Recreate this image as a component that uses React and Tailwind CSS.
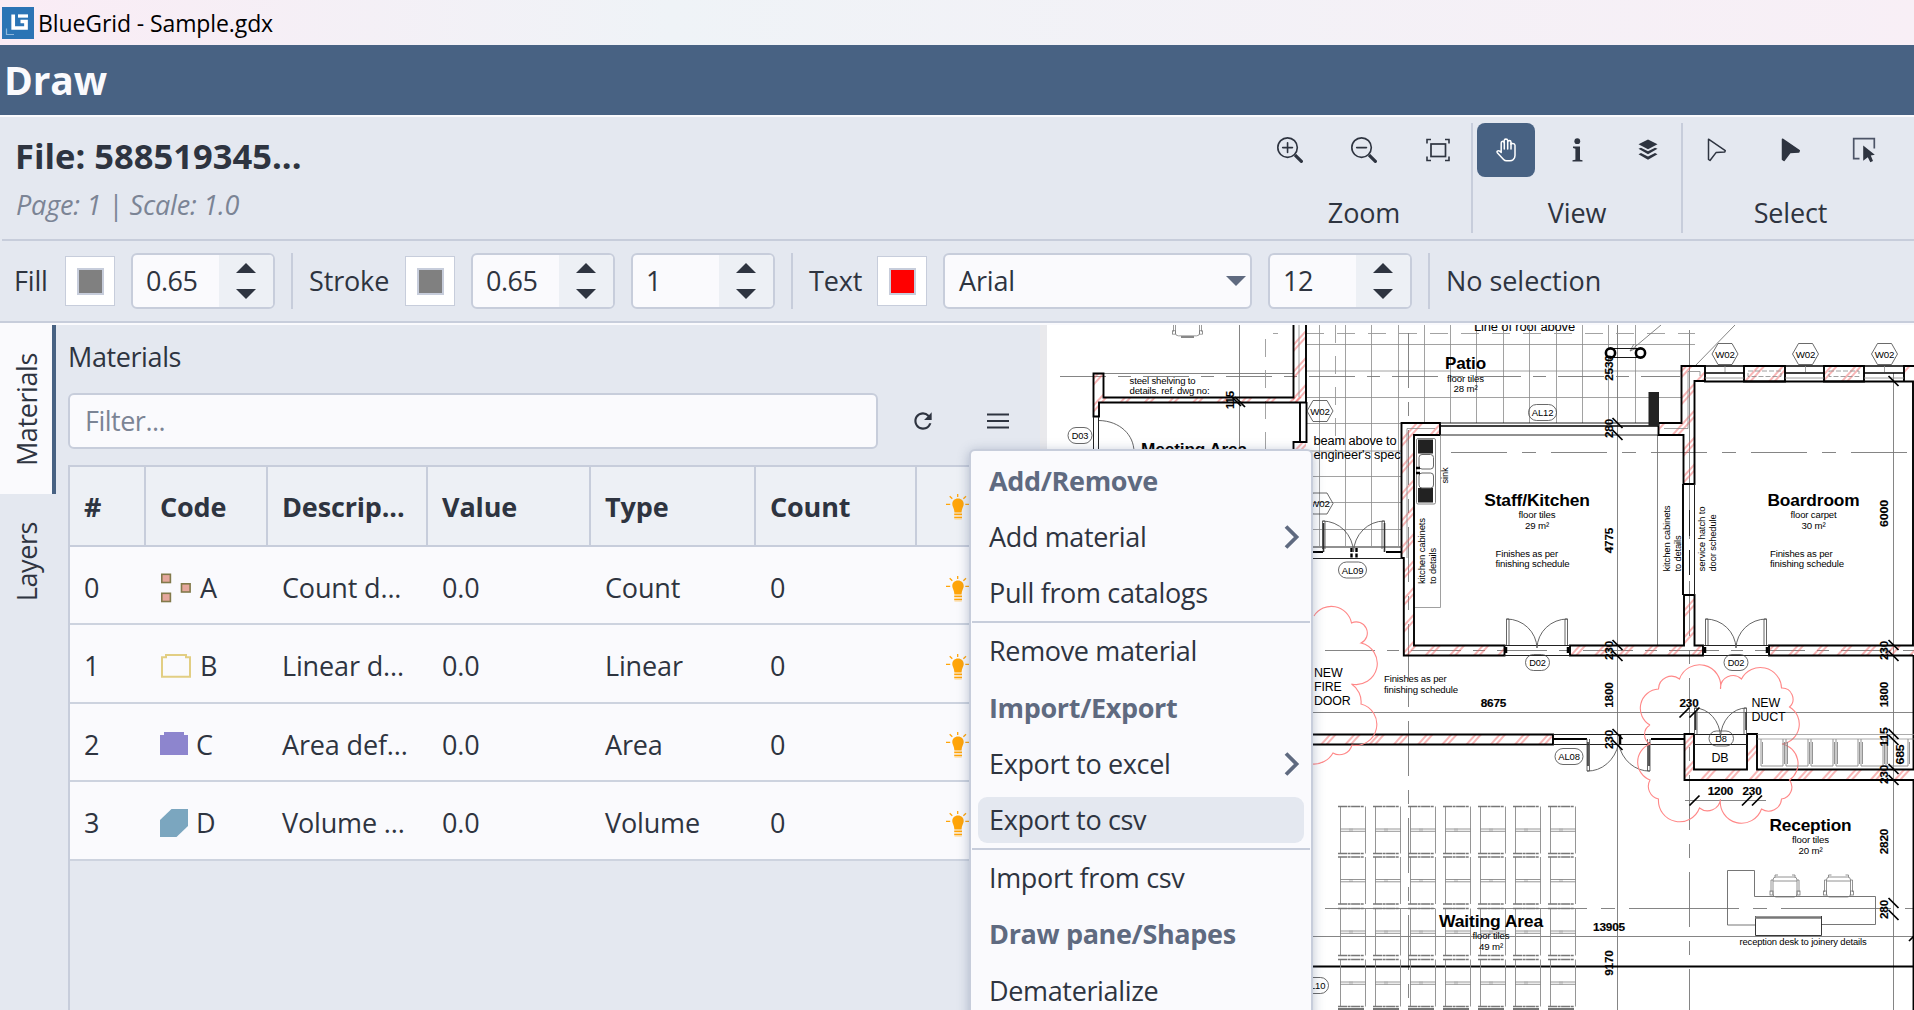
import React from 'react';
import { BsZoomIn, BsZoomOut } from 'react-icons/bs';
import { MdRefresh } from 'react-icons/md';

const FONT = "font-['Open_Sans','Noto_Sans',sans-serif]";

/* ---------- Icons ---------- */

function Logo() {
  return (
    <svg width="32" height="32" viewBox="0 0 32 32" className="shrink-0">
      <rect width="32" height="32" fill="#2b74b5" />
      <path d="M11.200 7.500V21H24V14.500H18.500" fill="none" stroke="#fff" strokeWidth="3.700" />
      <path d="M16 9H26" stroke="#fff" strokeWidth="3.300" />
      <path d="M4.500 21.500V27.500H12" fill="none" stroke="#8db6dc" strokeWidth="1.200" />
    </svg>
  );
}

function FitIcon() {
  return (
    <svg width="24" height="24" viewBox="0 0 24 24" fill="none" stroke="#2e3440">
      <path d="M1 5.500V1.500H5M19 1.500H23V5.500M23 18.500V22.500H19M5 22.500H1V18.500" strokeWidth="1.600" />
      <rect x="5" y="6" width="14.500" height="12.500" strokeWidth="1.700" />
    </svg>
  );
}

function HandIcon() {
  return (
    <svg width="20" height="24" viewBox="0 0 20 24" fill="none" stroke="#fff" strokeWidth="1.500" strokeLinejoin="round" strokeLinecap="round">
      <path d="M5.200 14.500V4.700Q5.200 3.300 6.700 3.200Q8.200 3.300 8.200 4.700V2.600Q8.300 1.200 9.900 1.100Q11.600 1.200 11.700 2.600V3.600Q11.900 2.500 13.300 2.500Q14.900 2.600 15 4V6.300Q15.400 5.300 16.800 5.400Q18.900 5.600 19 7.300V17.500Q19 20 17.200 21.600Q15.900 22.700 14 22.800H10.500Q8.800 22.700 7.600 21.400L1.300 14.700Q.700 13.800 1.300 13.200Q2.500 12.200 3.700 13.200Z" />
      <path d="M8.300 4.500V11M11.700 3.500V11M15 5V11" />
    </svg>
  );
}

function InfoIcon() {
  return (
    <svg width="11" height="24" viewBox="0 0 11 24" fill="#2e3440">
      <circle cx="5.300" cy="3.200" r="2.900" />
      <path d="M1 8.600H8V21.700L10.500 22.300V23.600H.500V22.300L3.400 21.700V10.700L1 10Z" />
    </svg>
  );
}

function LayersIcon() {
  return (
    <svg width="20" height="22" viewBox="0 0 20 22" fill="#2e3440">
      <path d="M10 .500L19.500 5.300L10 10.200L.500 5.300Z" />
      <path d="M.500 9.800L3 8.700L10 12.200L17 8.700L19.500 9.800L10 15.200Z" />
      <path d="M.500 15.200L3 14.100L10 17.600L17 14.100L19.500 15.200L10 20.700Z" />
    </svg>
  );
}

function ArrowIcon({ filled }) {
  return (
    <svg width="20" height="24" viewBox="0 0 20 24" fill={filled ? '#2e3440' : 'none'} stroke="#2e3440" strokeWidth="1.500" strokeLinejoin="round">
      <path d="M1.500 1.200L18.300 12.600L17.800 13.900L9 14.600L3 22.500L1.500 21.500Z" />
    </svg>
  );
}

function BoxSelectIcon() {
  return (
    <svg width="24" height="26" viewBox="0 0 24 26">
      <path d="M7.500 21.600H1.700V1.600H22.300V11.500" fill="none" stroke="#4c5467" strokeWidth="1.700" />
      <path d="M11.200 8.500L22.800 17.700L18.800 18.600L21 24L18.300 25.300L15.800 20.200L11.200 23.700Z" fill="#2e3440" />
    </svg>
  );
}

function MenuIcon() {
  return (
    <svg width="22" height="16" viewBox="0 0 22 16" stroke="#2e3440" strokeWidth="1.800">
      <path d="M0 1.500H22M0 8H22M0 14.500H22" />
    </svg>
  );
}

function BulbIcon() {
  return (
    <svg width="24" height="26" viewBox="0 0 24 26" className="shrink-0">
      <path d="M12 4.500C15.500 4.500 17.700 6.900 17.700 10C17.700 12.500 15.800 13.800 15.600 18.500H8.400C8.200 13.800 6.300 12.500 6.300 10C6.300 6.900 8.500 4.500 12 4.500Z" fill="#ffa50a" />
      <path d="M8.200 20.300H16M8.200 23.500H16" stroke="#ffa50a" strokeWidth="1.500" />
      <path d="M8.200 22H16M8.500 25H15.700" stroke="#ffd38a" strokeWidth="1" />
      <path d="M11.700 0V3M3.700 2.300L6.300 4.800M20 2.300L17.400 4.800M0 10.300H4.200M19.300 10.300H23.500" stroke="#ffa50a" strokeWidth="1.300" />
    </svg>
  );
}

const materialIcons = {
  A: (
    <svg width="32" height="30" viewBox="0 0 32 30" fill="#e5a79c" stroke="#827a4b" strokeWidth="1.600">
      <rect x="1.800" y="1.300" width="8.600" height="8.200" />
      <rect x="1.800" y="20.300" width="8.600" height="8.200" />
      <rect x="21.500" y="10.800" width="8.600" height="8.200" />
    </svg>
  ),
  B: (
    <svg width="32" height="26" viewBox="0 0 32 26" fill="none" stroke="#e2ce83" strokeWidth="2">
      <path d="M2 4.300H6V2H26V4.300H30V23.700H2Z" />
    </svg>
  ),
  C: (
    <svg width="28" height="24" viewBox="0 0 28 24">
      <path d="M0 3H4V0H24V3H28V23H0Z" fill="#8d85ce" />
    </svg>
  ),
  D: (
    <svg width="28" height="28" viewBox="0 0 28 28">
      <path d="M11.500 0H28V17L16.500 28H0V11Z" fill="#7ba6bf" />
    </svg>
  ),
};

/* ---------- Ribbon ---------- */

function ToolButton({ active, children }) {
  return (
    <div className={'flex h-[54px] w-[58px] items-center justify-center rounded-[8px] ' + (active ? 'bg-[#486283]' : '')}>
      {children}
    </div>
  );
}

function ToolGroup({ label, className, children }) {
  return (
    <div className={'flex flex-col items-center ' + className}>
      <div className="flex w-full justify-between">{children}</div>
      <div className="mt-[17px] leading-[38px]">{label}</div>
    </div>
  );
}

function Ribbon() {
  return (
    <div className="ml-[2px] flex h-[124px] border-b-2 border-[#c7cddb] pt-[6px]">
      <div className="w-[1259px] pl-[13px]">
        <div className="mt-[9px] text-[34.5px] leading-[48px] font-bold tracking-[0.02px]">File: 588519345...</div>
        <div className="pl-[1px] text-[27px] leading-[49px] tracking-[-0.2px] text-[#7b8495] italic">Page: 1 | Scale: 1.0</div>
      </div>
      <ToolGroup label="Zoom" className="w-[206px]">
        <ToolButton><BsZoomIn size={26} /></ToolButton>
        <ToolButton><BsZoomOut size={26} /></ToolButton>
        <ToolButton><FitIcon /></ToolButton>
      </ToolGroup>
      <div className="mr-[4px] ml-[4px] h-[110px] w-[2px] bg-[#c7cddb]" />
      <ToolGroup label="View" className="w-[200px]">
        <ToolButton active><HandIcon /></ToolButton>
        <ToolButton><InfoIcon /></ToolButton>
        <ToolButton><LayersIcon /></ToolButton>
      </ToolGroup>
      <div className="mr-[5px] ml-[4px] h-[110px] w-[2px] bg-[#c7cddb]" />
      <ToolGroup label="Select" className="w-[205px]">
        <ToolButton><ArrowIcon /></ToolButton>
        <ToolButton><ArrowIcon filled /></ToolButton>
        <ToolButton><BoxSelectIcon /></ToolButton>
      </ToolGroup>
    </div>
  );
}

/* ---------- Property bar ---------- */

function Swatch({ color }) {
  return (
    <div className="mr-4 flex h-[50px] w-[50px] items-center justify-center border border-[#c7cddb] bg-white">
      <div className={'h-[27px] w-[27px] border-2 border-[#c7cddb] ' + color} />
    </div>
  );
}

function Spin({ value }) {
  return (
    <div className="mr-4 flex h-14 w-36 overflow-hidden rounded-[6px] border-2 border-[#c7cddb] bg-[#fafafd]">
      <div className="w-[86px] pl-[13px] leading-[52px] tracking-[-0.5px]">{value}</div>
      <div className="flex flex-1 flex-col items-center justify-center gap-[16px] bg-[#edf0f5]">
        <svg width="20" height="10" viewBox="0 0 20 10"><path d="M0 10L10 0L20 10Z" fill="#2e3440" /></svg>
        <svg width="20" height="10" viewBox="0 0 20 10"><path d="M0 0L10 10L20 0Z" fill="#2e3440" /></svg>
      </div>
    </div>
  );
}

const BarDivider = () => <div className="mr-4 h-14 w-[2px] bg-[#c7cddb]" />;

function PropertyBar() {
  return (
    <div className="flex h-[82px] items-center border-b-2 border-[#c7cddb] pl-[14px]">
      <div className="w-[51px]">Fill</div>
      <Swatch color="bg-[#808080]" />
      <Spin value="0.65" />
      <BarDivider />
      <div className="w-[96px]">Stroke</div>
      <Swatch color="bg-[#808080]" />
      <Spin value="0.65" />
      <Spin value="1" />
      <BarDivider />
      <div className="w-[68px]">Text</div>
      <Swatch color="bg-[#ff0000]" />
      <div className="mr-4 flex h-14 w-[309px] items-center justify-between rounded-[6px] border-2 border-[#c7cddb] bg-[#fafafd] pr-[4px] pl-[14px]">
        <span>Arial</span>
        <svg width="20" height="10" viewBox="0 0 20 10"><path d="M0 0L10 10L20 0Z" fill="#5f6a80" /></svg>
      </div>
      <Spin value="12" />
      <BarDivider />
      <div className="tracking-[-0.05px]">No selection</div>
    </div>
  );
}

/* ---------- Materials panel ---------- */

const rows = [
  ['0', 'A', 'Count d...', 'Count'],
  ['1', 'B', 'Linear d...', 'Linear'],
  ['2', 'C', 'Area def...', 'Area'],
  ['3', 'D', 'Volume ...', 'Volume'],
];

const GRID = 'grid grid-cols-[76px_122px_160px_163px_165px_161px_125px]';

function SideTabs() {
  return (
    <div className="flex w-14 shrink-0 flex-col tracking-[-0.4px]">
      <div className="flex h-[169px] items-center justify-center border-r-4 border-[#486283] bg-[#fafafd] pl-[2px]">
        <span className="rotate-180 [writing-mode:vertical-rl]">Materials</span>
      </div>
      <div className="flex h-[134px] items-center justify-center pt-[2px] pr-[2px]">
        <span className="rotate-180 [writing-mode:vertical-rl]">Layers</span>
      </div>
    </div>
  );
}

function MaterialsPanel() {
  const head = ['#', 'Code', 'Descrip...', 'Value', 'Type', 'Count'];
  return (
    <div className="w-[984px] shrink-0 pl-3">
      <div className="h-[68px] pt-[13px] leading-[38px] tracking-[-0.4px]">Materials</div>
      <div className="flex h-14 items-center">
        <div className="h-14 w-[810px] rounded-[6px] border-2 border-[#c7cddb] bg-[#fafafd] pl-[15px] leading-[52px] tracking-[-0.5px] text-[#7b8495]">Filter...</div>
        <MdRefresh size={26} className="ml-[32px]" />
        <div className="ml-[51px]"><MenuIcon /></div>
      </div>
      <div className="mt-4 h-[560px] w-[974px] border-2 border-[#c7cddb]">
        <div className={GRID + ' h-20 border-b-2 border-[#c7cddb] bg-[#edf0f5] font-bold'}>
          {head.map((h) => (
            <div key={h} className="border-r-2 border-[#c7cddb] pl-[14px] leading-[80px]">{h}</div>
          ))}
          <div className="flex items-center pl-[29px]"><BulbIcon /></div>
        </div>
        {rows.map(([n, code, desc, type]) => (
          <div key={n} className={GRID + ' h-[78.4px] border-b-2 border-[#cdd3df] bg-[#fafafd] leading-[81px]'}>
            <div className="pl-[14px]">{n}</div>
            <div className="flex items-center gap-2 pl-[14px]">{materialIcons[code]}<span>{code}</span></div>
            <div className="pl-[14px]">{desc}</div>
            <div className="pl-[14px]">0.0</div>
            <div className="pl-[14px]">{type}</div>
            <div className="pl-[14px]">0</div>
            <div className="flex items-center pt-[2px] pl-[29px]"><BulbIcon /></div>
          </div>
        ))}
      </div>
    </div>
  );
}

/* ---------- Context menu ---------- */

const menu = [
  { t: 'Add/Remove', head: true },
  { t: 'Add material', sub: true },
  { t: 'Pull from catalogs' },
  { sep: true },
  { t: 'Remove material' },
  { t: 'Import/Export', head: true },
  { t: 'Export to excel', sub: true },
  { t: 'Export to csv', active: true },
  { sep: true },
  { t: 'Import from csv' },
  { t: 'Draw pane/Shapes', head: true },
  { t: 'Dematerialize' },
];

function ContextMenu() {
  return (
    <div className="absolute top-[449px] left-[969px] h-[700px] w-[344px] rounded-[6px] border-2 border-[#c7cddb] bg-[#fafafd] px-px pt-[1.5px] tracking-[-0.35px] shadow-[0_2px_12px_rgba(60,80,120,0.35)]">
      {menu.map((m, i) =>
        m.sep ? (
          <div key={i} className="h-[2px] bg-[#c7cddb]" />
        ) : (
          <div key={i} className="flex h-[56.2px] items-center px-[6px]">
            <div className={'flex h-[46px] w-full items-center justify-between rounded-[9px] pt-px pr-[4px] pl-[11px] ' + (m.active ? 'bg-[#e4e8f0] ' : '') + (m.head ? 'font-bold text-[#5f6a80]' : '')}>
              <span>{m.t}</span>
              {m.sub && (
                <svg width="16" height="26" viewBox="0 0 16 26"><path d="M2 2.500L12.500 13L2 23.500" fill="none" stroke="#5f6a80" strokeWidth="3.800" /></svg>
              )}
            </div>
          </div>
        )
      )}
    </div>
  );
}

/* ---------- Floor plan ---------- */

function Txt({ x, y, w, s = 9.7, b, mid, rot, heavy, children }) {
  return (
    <text
      x={x}
      y={y}
      fontSize={s}
      fontWeight={b || heavy ? 700 : 400}
      textAnchor={mid ? 'middle' : 'start'}
      textLength={w}
      lengthAdjust="spacingAndGlyphs"
      fill="#000"
      stroke={heavy ? '#000' : 'none'}
      strokeWidth={heavy ? 0.15 : 0}
      transform={rot ? `rotate(-90 ${x} ${y})` : undefined}
    >
      {children}
    </text>
  );
}

const Dim = ({ x, y, w = 25.5, rot = true, children }) => (
  <Txt x={x} y={y} w={w} s={10.2} mid heavy rot={rot}>{children}</Txt>
);

const Slash = ({ x, y, flip }) => (
  <path d={flip ? `M${x - 5} ${y + 5}L${x + 5} ${y - 5}` : `M${x - 5} ${y - 5}L${x + 5} ${y + 5}`} stroke="#000" strokeWidth="1.700" />
);

function Badge({ x, y, w = 24, children }) {
  return (
    <g>
      <rect x={x - w / 2} y={y - 8} width={w} height={16} rx={8} fill="none" stroke="#444" strokeWidth="0.800" />
      <Txt x={x} y={y + 3.5} mid s={9.6} w={w > 25 ? 21.5 : 16.5}>{children}</Txt>
    </g>
  );
}

function Hex({ x, y }) {
  return (
    <g>
      <path d={`M${x - 13} ${y}L${x - 7} ${y - 10.5}H${x + 7}L${x + 13} ${y}L${x + 7} ${y + 10.5}H${x - 7}Z`} fill="none" stroke="#444" strokeWidth="0.800" />
      <Txt x={x} y={y + 3.7} mid s={9.6} w={19.5}>W02</Txt>
    </g>
  );
}

function Room({ x, y, w, name, floor, area }) {
  return (
    <g>
      <Txt x={x} y={y} w={w} s={17.3} b mid>{name}</Txt>
      <Txt x={x} y={y + 12.5} w={floor === 'floor carpet' ? 46 : 37} mid>{floor}</Txt>
      <Txt x={x} y={y + 23} w={24} mid>{area}</Txt>
    </g>
  );
}

const tileX = [1319.5, 1345.5, 1371.5, 1398.5, 1424.5, 1450.5, 1476.5, 1503.5, 1529.5, 1556.5, 1582.5, 1608.5, 1635.5];
const seatCols = [1340, 1375, 1410, 1445, 1480, 1515, 1550];
const seatRows = [806.5, 857, 908.5, 959.5];

function DoorPair({ x, y, half = 30, h = 26, down }) {
  const e = down ? y + h : y - h;
  const base = down ? y + 5 : y + 3;
  return (
    <g fill="none" stroke="#555" strokeWidth="0.900">
      <path d={`M${x - half} ${y}V${e}h2.500V${y}M${x + half} ${y}V${e}h-2.500V${y}`} />
      <path d={`M${x - half} ${e}A${half} ${h + 4} 0 0 ${down ? 0 : 1} ${x} ${base}A${half} ${h + 4} 0 0 ${down ? 0 : 1} ${x + half} ${e}`} />
    </g>
  );
}

function OfficeChair({ x, y, s = 1 }) {
  return (
    <g transform={`translate(${x} ${y}) scale(1 ${s})`} fill="none" stroke="#777" strokeWidth="0.800">
      <rect x="-12" y="1" width="24" height="20" rx="3" />
      <path d="M-12 5H12M-10 1V-1H-7M10 1V-1H7M-12 4H-14V16M12 4H14V16" />
      <rect x="-15" y="15" width="3" height="4" />
      <rect x="12" y="15" width="3" height="4" />
    </g>
  );
}

function FloorPlan() {
  return (
    <svg width="867" height="685" viewBox="1047 325 867 685" className="shrink-0 bg-white" fontFamily="'Liberation Sans', Arial, sans-serif">
      <defs>
        <pattern id="hatch" width="18" height="18" patternUnits="userSpaceOnUse" patternTransform="rotate(42)">
          <path d="M4 0V18M8 0V18" stroke="#f05a5a" strokeWidth="0.900" />
        </pattern>
      </defs>

      {/* patio tiles */}
      <g stroke="#8a8a8a" strokeWidth="0.800" fill="none">
        {tileX.map((x) => (
          <path key={x} d={`M${x} 325V${x < 1400 ? 546 : 423}`} />
        ))}
        <path d="M1306 344.500H1695M1306 371H1681M1306 397.500H1681M1306 423.500H1401M1306 451H1401M1306 476.500H1401M1306 502.500H1401M1306 529.500H1401" />
      </g>

      {/* centre lines and dimension lines */}
      <g stroke="#777" strokeWidth="0.900" fill="none">
        <path d="M1239.500 325V450M1617.500 325V1010M1893.500 373V1010M1657.500 435V645M1689.500 330V484" />
        <path d="M1060 376.500H1680" strokeDasharray="46 12 13 12" />
        <path d="M1103 373.500H1293" />
        <path d="M1265.500 450V333.500H1278M1335.500 325V450M1306 333.500H1695" strokeDasharray="18 13" stroke="#999" />
        <path d="M1408.500 333V1010M1689.500 484V1010" strokeDasharray="55 14 14 14" />
        <path d="M1451 452.500H1914" strokeDasharray="56 15 14 15" />
        <path d="M1325 650.500H1914" strokeDasharray="50 12 12 12" />
        <path d="M1325 908.500H1914" strokeDasharray="110 14 14 14" />
        <path d="M1312 712.500H1914M1312 936.500H1914M1685 800.500H1766" />
        <path d="M1735 325L1695 366M1661 325L1630 351L1634 344M1630 351L1637 348" />
      </g>
      <path d="M1312 966.500H1914" stroke="#000" strokeWidth="1.800" />

      {/* hatched walls */}
      <g fill="url(#hatch)">
        <path d="M1093 373H1103V397H1306V402H1099V416H1093Z" />
        <path d="M1293 325H1306V402H1293Z" />
        <path d="M1293 442H1306V455H1293Z" />
        <path d="M1401 423H1440V435H1414V645H1505V655H1403V558H1401Z" />
        <path d="M1658 423H1681V366H1705V381H1694V484H1684V435H1658Z" />
        <path d="M1684 595H1694V645H1703V655H1570V645H1684Z" />
        <path d="M1769 645H1914V655H1769Z" />
        <path d="M1744 366H1785V381H1744ZM1824 366H1864V381H1824ZM1904 366H1914V381H1904Z" />
        <path d="M1312 734H1553V745H1312Z" />
        <path d="M1684 734H1694V769.500H1747V734H1757V769.500H1914V780H1684Z" />
      </g>

      {/* heavy outlines */}
      <g fill="none" stroke="#000" strokeWidth="1.900">
        <path d="M1293.500 325V397.500H1103.500V373.500H1093.500V416.500H1099V402.500H1306V325" />
        <path d="M1293.500 455V442H1306.500V402M1300 402V442" />
        <path d="M1440 423H1401.500V558H1403.800V655.500H1504.500V645.500H1414V435H1440Z" />
        <path d="M1658.500 423H1681.500V366H1705V381H1694.500V484H1683.500V435H1658.500Z" />
        <path d="M1684 645.500V595H1694.500V645.500H1703V655.500H1570V645.500Z" />
        <path d="M1683 484V595M1913 655.500H1769V645.500H1913V381.500H1704" />
        <path d="M1744 366H1785V381.500H1744ZM1824 366H1864V381.500H1824ZM1914 366H1904V381.500" />
        <path d="M1705 366H1914M1705 373H1744M1785 373H1824M1864 373H1904M1440 426H1658" strokeWidth="1.400" />
        <path d="M1312 734.500H1553V744.500H1312" />
        <path d="M1684.500 734H1694V769.500H1747V734H1757V769.500H1914M1684.500 733V780H1914" />
        <path d="M1553 739H1587M1651 739H1684M1313 552H1323M1386 552H1402" />
        <path d="M1913.500 655V769M1913.500 780V1010" />
        <path d="M1351.500 548V558M1356.500 548V558" strokeWidth="2.400" strokeDasharray="4 1.500" />
      </g>

      {/* light outlines */}
      <g fill="none" stroke="#222" strokeWidth="1">
        <path d="M1093.500 417V455M1098.500 417V455M1440 423H1658M1440 435H1658M1312 547H1402M1312 558.500H1402" />
        <path d="M1694.500 484V595M1689.500 510V536M1689.500 550V575" />
        <path d="M1504 645.500H1570M1504 655.500H1570M1703 645.500H1769M1703 655.500H1769M1553 734.500H1684M1553 744.500H1684M1694 734.500H1747M1694 744.500H1747" />
      </g>
      <g fill="none" stroke="#888" strokeWidth="0.800">
        <path d="M1299 325V397M1435 428.500H1407V558M1664 428.500H1688V371.500H1700V376M1440.500 435V607.500H1415" />
        <rect x="1748" y="371" width="33" height="5.500" strokeDasharray="5 2" />
        <rect x="1829" y="371" width="30" height="5.500" strokeDasharray="5 2" />
        <path d="M1705 378H1744M1785 378H1824M1864 378H1904M1725 366V372M1805.500 366V372M1884.500 366V372" />
      </g>

      {/* sink */}
      <rect x="1416.500" y="438.500" width="19" height="65.500" rx="1.500" fill="#fff" stroke="#777" strokeWidth="0.900" />
      <path d="M1418 439.500H1433V453.500H1418ZM1418 488H1433V502.500H1418Z" fill="#222" />
      <rect x="1419" y="454.500" width="14.500" height="14.500" rx="3" fill="#fff" stroke="#666" />
      <rect x="1419" y="473" width="14.500" height="15" rx="3" fill="#fff" stroke="#666" />
      <path d="M1416 468H1420M1416 473H1420" stroke="#000" strokeWidth="2.500" />

      {/* patio fittings */}
      <g fill="none" stroke="#000">
        <rect x="1612" y="348.500" width="28" height="9" strokeWidth="0.900" />
        <circle cx="1610.500" cy="353" r="4.600" fill="#fff" strokeWidth="2.600" />
        <circle cx="1640.500" cy="353" r="4.600" fill="#fff" strokeWidth="2.600" />
      </g>
      <rect x="1648.500" y="392" width="10.500" height="34" fill="#222" />

      {/* doors */}
      <DoorPair x={1537} y={645} half={30.5} />
      <DoorPair x={1736} y={645} half={30.5} />
      <DoorPair x={1353.500} y={549} half={31} h={28} />
      <DoorPair x={1618.500} y={739} half={31.500} h={32} down />
      <DoorPair x={1720.500} y={734} half={26} h={26} />
      <path d="M1099 420.500C1120 421 1134 435 1134 452" fill="none" stroke="#555" strokeWidth="0.900" />
      <path d="M1323.500 523V552M1384.500 523V552M1588 742V766M1649 742V766M1695.500 712V730M1746 712V730" stroke="#333" strokeWidth="1.600" />
      <path d="M1506 647V653M1568 647V653M1705 647V653M1767 647V653M1620 735V744" stroke="#000" strokeWidth="2.500" />

      {/* revision clouds */}
      <g fill="none" stroke="#f88" strokeWidth="1.100">
        <path d="M1314 616A20.500 20.500 0 0 1 1351.500 623A11 11 0 0 1 1361 643A21 21 0 0 1 1351.500 684A21 21 0 0 1 1361 704A21 21 0 0 1 1352 745A13 13 0 0 1 1333 753A22 22 0 0 1 1312 764" />
        <path d="M1650 725A19.300 19.300 0 0 1 1658.500 689A13 13 0 0 1 1679.500 679A21.200 21.200 0 0 1 1720.500 689A12.500 12.500 0 0 1 1741.500 679A21.200 21.200 0 0 1 1781.500 688A11 11 0 0 1 1789.500 707A20 20 0 0 1 1782 744A20 20 0 0 1 1789.500 780A12 12 0 0 1 1781.500 799A13 13 0 0 1 1761.500 809A21.200 21.200 0 0 1 1720.500 799A13 13 0 0 1 1699.500 808A21.200 21.200 0 0 1 1658.500 799A13 13 0 0 1 1650 780A19.300 19.300 0 0 1 1650 744A11 11 0 0 1 1650 725" />
      </g>

      {/* lobby seats */}
      <g fill="none" stroke="#888" strokeWidth="0.900">
        <path d="M1757 739H1914M1757 734.500H1914" strokeWidth="0.700" />
        {[1761, 1786, 1811, 1836, 1861, 1886].map((x) => (
          <path key={x} d={`M${x} 739V766H${x + 22}V739M${x + 1.5} 742V764M${x + 23.5} 742V764`} />
        ))}
      </g>

      {/* waiting area seats */}
      <g fill="none" stroke="#8a8a8a" strokeWidth="0.900">
        {seatRows.map((y) =>
          seatCols.map((x) => (
            <g key={x + '-' + y}>
              <path d={`M${x + 0.5} ${y}V${y + 47}M${x + 25.500} ${y}V${y + 47}M${x} ${y + 22.500}H${x + 26}M${x} ${y + 24.800}H${x + 26}`} />
              <path d={`M${x - 2} ${y}H${x + 24}M${x - 2} ${y + 47}H${x + 24}`} stroke="#777" strokeWidth="1.500" strokeDasharray="9 0.600 3 0.500" />
              <path d={`M${x + 10} ${y + 22}v3M${x + 12} ${y + 22}v3`} strokeWidth="0.600" />
            </g>
          ))
        )}
        {seatCols.map((x) => (
          <path key={x} d={`M${x - 2} 1009H${x + 24}`} stroke="#666" strokeWidth="1.800" />
        ))}
      </g>

      {/* reception desk */}
      <g fill="none" stroke="#666" strokeWidth="0.900">
        <path d="M1755 925H1727.500V870.500H1754.500V896.500H1875.500V924.500H1821" />
        <path d="M1755.500 916V935.500H1821.500V916" stroke="#222" />
        <path d="M1755 917.500H1821" stroke="#777" strokeWidth="2.500" />
      </g>
      <OfficeChair x={1785} y={876} />
      <OfficeChair x={1838.500} y={876} />
      <OfficeChair x={1187.500} y={318} s={0.850} />
      <path d="M1181 337H1194" stroke="#888" strokeWidth="2" />

      {/* dimension ticks */}
      <Slash x={1236} y={401} /><Slash x={1240} y={402} />
      <Slash x={1617.500} y={423} /><Slash x={1617.500} y={435} />
      <Slash x={1617.500} y={645} /><Slash x={1617.500} y={656} />
      <Slash x={1617.500} y={734} /><Slash x={1617.500} y={745} />
      <Slash x={1893.500} y={381} />
      <Slash x={1893.500} y={645} /><Slash x={1893.500} y={656} />
      <Slash x={1893.500} y={734} /><Slash x={1893.500} y={740} />
      <Slash x={1893.500} y={769} /><Slash x={1893.500} y={780} />
      <Slash x={1893.500} y={903} /><Slash x={1893.500} y={915} />
      <Slash x={1684.500} y={712.500} flip /><Slash x={1694.500} y={712.500} flip />
      <Slash x={1694.500} y={800.500} flip /><Slash x={1747} y={800.500} flip /><Slash x={1757} y={800.500} flip />
      <Slash x={1914} y={936} flip />

      {/* dimension values */}
      <Dim x={1234} y={400} w={18}>115</Dim>
      <Dim x={1612.500} y={368}>2530</Dim>
      <Dim x={1612.500} y={428.500} w={19}>280</Dim>
      <Dim x={1612.500} y={540.500}>4775</Dim>
      <Dim x={1612.500} y={650.500} w={19}>230</Dim>
      <Dim x={1612.500} y={695}>1800</Dim>
      <Dim x={1612.500} y={739.500} w={19}>230</Dim>
      <Dim x={1612.500} y={963}>9170</Dim>
      <Dim x={1888} y={513.500} w={27}>6000</Dim>
      <Dim x={1888} y={650.500} w={19}>230</Dim>
      <Dim x={1888} y={694.500}>1800</Dim>
      <Dim x={1888} y={737} w={19}>115</Dim>
      <Dim x={1903.500} y={754.500} w={20}>685</Dim>
      <Dim x={1888} y={774.500} w={19}>230</Dim>
      <Dim x={1888} y={841.500}>2820</Dim>
      <Dim x={1888} y={909.500} w={19}>280</Dim>
      <Dim x={1493.500} y={707} rot={false}>8675</Dim>
      <Dim x={1689} y={707} w={19} rot={false}>230</Dim>
      <Dim x={1720.500} y={795} rot={false}>1200</Dim>
      <Dim x={1752} y={795} w={19} rot={false}>230</Dim>
      <Dim x={1609} y={931} w={32} rot={false}>13905</Dim>

      {/* room names */}
      <Room x={1465.500} y={369} w={41} name="Patio" floor="floor tiles" area="28 m²" />
      <Room x={1537} y={505.500} w={105.500} name="Staff/Kitchen" floor="floor tiles" area="29 m²" />
      <Room x={1813.500} y={505.500} w={92} name="Boardroom" floor="floor carpet" area="30 m²" />
      <Room x={1810.500} y={830.500} w={82} name="Reception" floor="floor tiles" area="20 m²" />
      <Room x={1491} y={926.500} w={104} name="Waiting Area" floor="floor tiles" area="49 m²" />
      <Txt x={1194} y={455} w={106} s={17.3} b mid>Meeting Area</Txt>

      {/* notes */}
      <Txt x={1129.500} y={384} w={66}>steel shelving to</Txt>
      <Txt x={1129.500} y={394.300} w={80}>details. ref. dwg no:</Txt>
      <Txt x={1313.500} y={444.500} w={83} s={12.5}>beam above to</Txt>
      <Txt x={1313.500} y={459} w={87} s={12.5}>engineer's spec</Txt>
      <Txt x={1474} y={330.500} w={101} s={12.5}>Line of roof above</Txt>
      <Txt x={1495.500} y={556.500} w={62.5}>Finishes as per</Txt>
      <Txt x={1495.500} y={567.300} w={74}>finishing schedule</Txt>
      <Txt x={1770} y={556.500} w={62.5}>Finishes as per</Txt>
      <Txt x={1770} y={567.300} w={74}>finishing schedule</Txt>
      <Txt x={1384} y={682.300} w={62.5}>Finishes as per</Txt>
      <Txt x={1384} y={693} w={74}>finishing schedule</Txt>
      <Txt x={1425} y={584} w={66} rot>kitchen cabinets</Txt>
      <Txt x={1435.500} y={584} w={36} rot>to details</Txt>
      <Txt x={1448} y={483.500} w={16} rot>sink</Txt>
      <Txt x={1670} y={571.500} w={66} rot>kitchen cabinets</Txt>
      <Txt x={1681} y={571.500} w={36} rot>to details</Txt>
      <Txt x={1705} y={571.500} w={65} rot>service hatch to</Txt>
      <Txt x={1715.500} y={571.500} w={57} rot>door schedule</Txt>
      <Txt x={1314} y={676.500} w={28.5} s={12.5}>NEW</Txt>
      <Txt x={1314} y={690.800} w={27.5} s={12.5}>FIRE</Txt>
      <Txt x={1314} y={705} w={36.5} s={12.5}>DOOR</Txt>
      <Txt x={1751.500} y={706.800} w={28.5} s={12.5}>NEW</Txt>
      <Txt x={1751.500} y={721.300} w={34} s={12.5}>DUCT</Txt>
      <Txt x={1720} y={761.500} w={17} s={12.5} mid>DB</Txt>
      <Txt x={1739.500} y={945} w={127}>reception desk to joinery details</Txt>

      {/* tags */}
      <Badge x={1080} y={435.500}>D03</Badge>
      <Badge x={1537.500} y={662.500}>D02</Badge>
      <Badge x={1736} y={662.500}>D02</Badge>
      <Badge x={1352.500} y={570} w={28}>AL09</Badge>
      <Badge x={1542.500} y={412.500} w={28}>AL12</Badge>
      <Badge x={1569} y={756.500} w={28}>AL08</Badge>
      <rect x="1709" y="731" width="24.500" height="15" rx="7.500" fill="none" stroke="#444" strokeWidth="0.800" />
      <Txt x={1721} y={742} w={11.5} s={9.6} mid>D8</Txt>
      <Badge x={1314.500} y={985.500} w={28}>AL10</Badge>
      <Hex x={1320} y={411} />
      <Hex x={1320} y={503.500} />
      <Hex x={1725} y={354} />
      <Hex x={1805.500} y={354} />
      <Hex x={1884.500} y={354} />
    </svg>
  );
}

export default function App() {
  return (
    <div className={'relative flex h-[1010px] w-[1914px] flex-col overflow-hidden bg-[#e4e8f0] text-[27px] tracking-[-0.15px] whitespace-nowrap text-[#2e3440] ' + FONT}>
      <div className="flex h-[45px] shrink-0 items-center bg-gradient-to-r from-[#faecf5] via-[#eff3f7] via-35% to-[#f8eff6] pl-[2px] text-[23px] tracking-[-0.1px] text-black">
        <Logo />
        <span className="ml-[4px] pt-[2px]">BlueGrid - Sample.gdx</span>
      </div>
      <div className="flex h-[72px] shrink-0 items-center border-b-2 border-[#fafafd] bg-[#486283] pl-[4px] text-[39px] font-bold text-[#fafafd]">Draw</div>
      <div className="shrink-0 border-b-2 border-[#fafafd]">
        <Ribbon />
        <PropertyBar />
      </div>
      <div className="flex flex-1 overflow-hidden">
        <SideTabs />
        <MaterialsPanel />
        <div className="w-[7px] shrink-0 bg-[#e9e9ec]" />
        <FloorPlan />
      </div>
      <ContextMenu />
    </div>
  );
}
